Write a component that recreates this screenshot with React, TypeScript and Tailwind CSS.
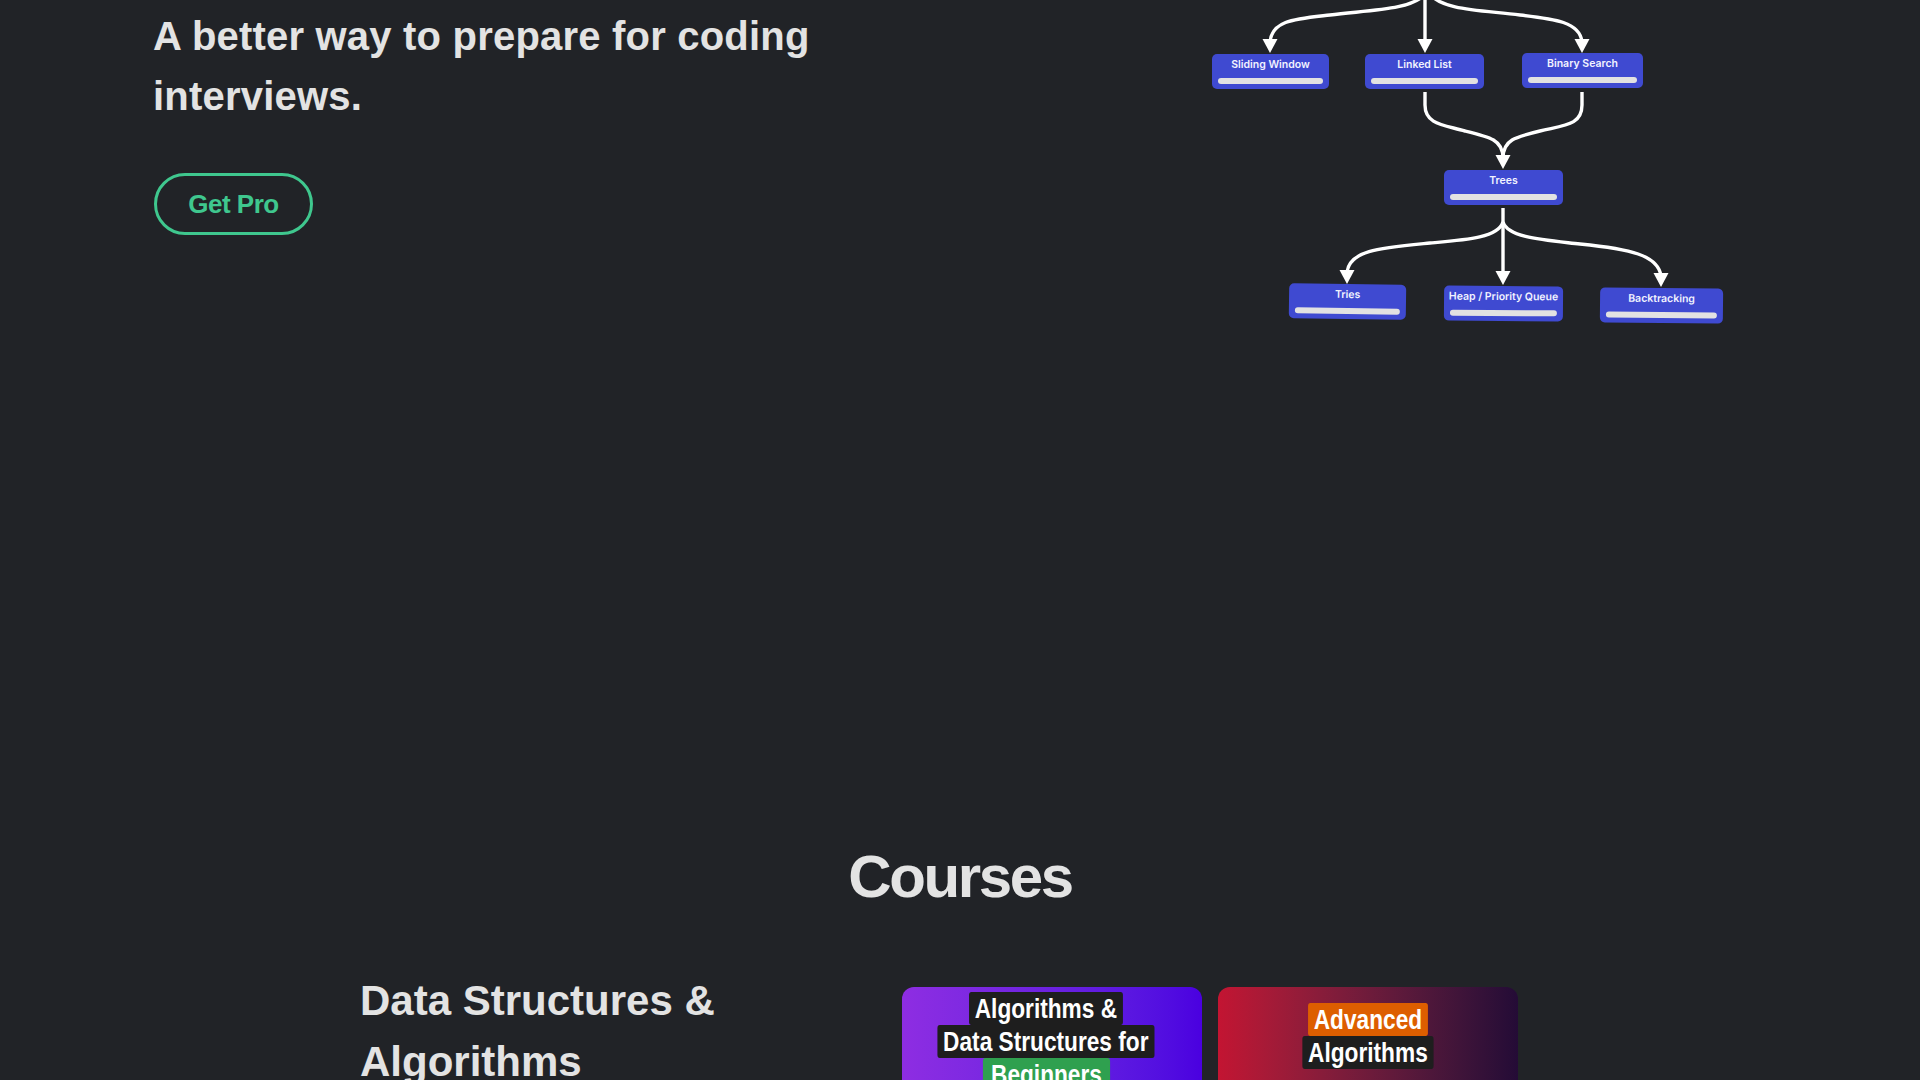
const sans = "font-['Liberation_Sans',Arial,sans-serif]"

const nodes = [
  { label: 'Sliding Window', cls: 'left-[32px] top-[54px] w-[117px] h-[35px]' },
  { label: 'Linked List', cls: 'left-[185px] top-[54px] w-[119px] h-[35px]' },
  { label: 'Binary Search', cls: 'left-[342px] top-[53px] w-[121px] h-[35px]' },
  { label: 'Trees', cls: 'left-[264px] top-[169.5px] w-[119px] h-[35px]' },
  { label: 'Tries', cls: 'left-[109px] top-[284px] w-[117px] h-[35px] rotate-[0.8deg]' },
  { label: 'Heap / Priority Queue', cls: 'left-[264px] top-[286px] w-[119px] h-[35px] rotate-[0.4deg]' },
  { label: 'Backtracking', cls: 'left-[420px] top-[288px] w-[123px] h-[35px] rotate-[0.6deg]' },
]

const lines = [
  'M245 -6 C232 10 190 10 150 15 C115 19 92 20 90 42',
  'M245 -4 V42',
  'M250 -6 C262 10 300 10 340 15 C375 19 400 22 402 42',
  'M245 92 V105 C245 125 265 125 285 131 C310 137 323 140 323 158',
  'M402 92 V105 C402 125 385 125 360 131 C335 137 323 140 323 158',
  'M323 208 V274',
  'M323 222 C318 238 285 240 250 243 C200 248 170 250 167 272',
  'M323 222 C328 238 365 240 400 244 C450 249 478 255 481 276',
]

const heads = [
  [90, 53],
  [245, 53],
  [402, 53],
  [323, 169],
  [167, 284],
  [323, 285],
  [481, 287],
]

function RoadmapDiagram() {
  return (
    <div className="relative mr-[140px] h-[340px] w-[600px]">
      <svg className="absolute inset-0 overflow-visible" width="600" height="340" fill="none">
        {lines.map((d) => (
          <path key={d} d={d} stroke="#ffffff" strokeWidth="3.4" />
        ))}
        {heads.map(([x, y]) => (
          <polygon key={`${x}-${y}`} points={`${x},${y} ${x - 7.5},${y - 14} ${x + 7.5},${y - 14}`} fill="#ffffff" />
        ))}
      </svg>
      {nodes.map((node) => (
        <div
          key={node.label}
          className={`absolute flex flex-col items-center justify-between rounded-[5px] bg-[#3f4ad1] px-[6px] pt-[4px] pb-[5px] ${node.cls}`}
        >
          <span className="font-['Inter',sans-serif] text-[10.5px] leading-[14px] font-semibold whitespace-nowrap text-[#f2f3ff]">
            {node.label}
          </span>
          <div className="h-[6px] w-full rounded-full bg-[#e2e2e2]"></div>
        </div>
      ))}
    </div>
  )
}

// no condensed font here, so the whole label gets squeezed horizontally
function Label({ text, color }: { text: string; color: string }) {
  return (
    <div className={`scale-x-[0.81] rounded-[3px] ${color}`}>
      <span className="block text-[28px] leading-[33px] font-bold whitespace-nowrap text-white">{text}</span>
    </div>
  )
}

export default function App() {
  return (
    <div className={`h-screen overflow-hidden bg-[#212327] text-[#e3e3e3] ${sans}`}>
      <section className="flex h-[830px] items-start justify-between pt-[6px] pl-[153px]">
        <div className="w-[700px]">
          <h2 className="text-[40px] leading-[60px] font-bold tracking-[0.2px]">
            A better way to prepare for coding interviews.
          </h2>
          <button className="mt-[47px] ml-px h-[62px] w-[159px] rounded-full border-[3px] border-[#3fc78e] pt-px text-[26px] font-bold tracking-[-0.5px] text-[#3fc78e]">
            Get Pro
          </button>
        </div>
        <div className="-mt-[6px]">
          <RoadmapDiagram />
        </div>
      </section>

      <h1 className="text-center text-[60px] leading-[94px] font-bold tracking-[-2.4px]">Courses</h1>

      <section className="mt-[46px] flex items-start pl-[360px]">
        <h3 className="w-[542px] pr-[100px] text-[42px] leading-[61px] font-bold">
          Data Structures &amp; Algorithms
        </h3>
        <div className="mt-[17px] flex gap-[16px]">
          <div className="flex h-[200px] w-[300px] flex-col items-center rounded-[12px] bg-gradient-to-r from-[#8e2de2] to-[#4a00e0] pt-[5px] pr-[12px]">
            <Label text="Algorithms &" color="bg-[#1e1e1e] px-[7px]" />
            <Label text="Data Structures for" color="bg-[#1e1e1e] px-[7px]" />
            <Label text="Beginners" color="bg-[#2fa04f] px-[10px]" />
          </div>
          <div className="flex h-[200px] w-[300px] flex-col items-center rounded-[12px] bg-gradient-to-r from-[#c31432] to-[#240b36] pt-[16px]">
            <Label text="Advanced" color="bg-[#dd5e00] px-[7px]" />
            <Label text="Algorithms" color="bg-[#1e1e1e] px-[7px]" />
          </div>
        </div>
      </section>
    </div>
  )
}
